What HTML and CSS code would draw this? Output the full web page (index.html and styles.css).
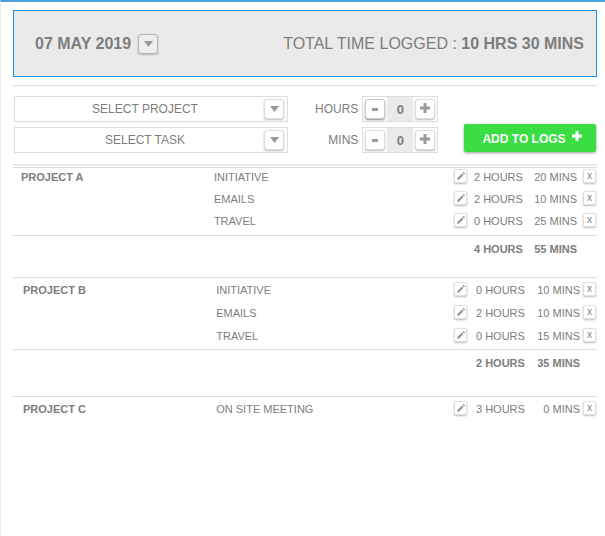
FILE: index.html
```html
<!DOCTYPE html>
<html lang="en">
<head>
<meta charset="utf-8">
<title>Time log</title>
<link rel="stylesheet" href="styles.css">
</head>
<body>
<svg class="sprites" aria-hidden="true">
  <symbol id="caret" viewBox="0 0 9 6"><path d="M0 0h9L4.500 6z"/></symbol>
  <symbol id="plus" viewBox="0 0 10 10"><path d="M3.500 0h3v3.500H10v3H6.500V10h-3V6.500H0v-3h3.500z"/></symbol>
  <symbol id="minus" viewBox="0 0 10 10"><path d="M2 5h6v3h-6z"/></symbol>
  <symbol id="pencil" viewBox="0 0 8 8"><path d="M0 8l.6-2.200L4.900 1.500l1.600 1.600L2.200 7.400zM5.400 1L6.200.2q.4-.3.800 0l.8.800q.3.400 0 .8l-.8.8z"/></symbol>
</svg>
<main class="page">
  <header class="summary">
    <div class="date">
      <strong>07 MAY 2019</strong>
      <button class="key key-date" type="button" aria-label="Choose date"><svg class="caret"><use href="#caret"/></svg></button>
    </div>
    <p class="total">TOTAL TIME LOGGED : <strong>10 HRS 30 MINS</strong></p>
  </header>

  <form class="entry">
    <div class="picks">
      <div class="pick">
        <select aria-label="Project"><option>SELECT PROJECT</option></select>
        <span class="key pick-key"><svg class="caret"><use href="#caret"/></svg></span>
      </div>
      <div class="pick">
        <select aria-label="Task"><option>SELECT TASK</option></select>
        <span class="key pick-key"><svg class="caret"><use href="#caret"/></svg></span>
      </div>
    </div>
    <div class="amounts">
      <label for="hours">HOURS</label>
      <div class="stepper">
        <button class="key key-strong" type="button" aria-label="Fewer hours"><svg class="sign"><use href="#minus"/></svg></button>
        <input id="hours" type="text" inputmode="numeric" value="0">
        <button class="key" type="button" aria-label="More hours"><svg class="sign"><use href="#plus"/></svg></button>
      </div>
      <label for="mins">MINS</label>
      <div class="stepper">
        <button class="key" type="button" aria-label="Fewer minutes"><svg class="sign"><use href="#minus"/></svg></button>
        <input id="mins" type="text" inputmode="numeric" value="0">
        <button class="key" type="button" aria-label="More minutes"><svg class="sign"><use href="#plus"/></svg></button>
      </div>
    </div>
    <button class="add" type="button">ADD TO LOGS <svg class="sign"><use href="#plus"/></svg></button>
  </form>

  <table class="log log-first">
    <tbody>
      <tr><th class="project" scope="row">PROJECT A</th><td class="task">INITIATIVE</td><td class="edit"><button class="key key-small" type="button" aria-label="Edit"><svg class="pencil"><use href="#pencil"/></svg></button></td><td class="hours">2 HOURS</td><td class="mins">20 MINS</td><td class="remove"><button class="key key-small" type="button" aria-label="Remove">x</button></td></tr>
      <tr><td></td><td>EMAILS</td><td><button class="key key-small" type="button" aria-label="Edit"><svg class="pencil"><use href="#pencil"/></svg></button></td><td>2 HOURS</td><td class="mins">10 MINS</td><td class="remove"><button class="key key-small" type="button" aria-label="Remove">x</button></td></tr>
      <tr><td></td><td>TRAVEL</td><td><button class="key key-small" type="button" aria-label="Edit"><svg class="pencil"><use href="#pencil"/></svg></button></td><td>0 HOURS</td><td class="mins">25 MINS</td><td class="remove"><button class="key key-small" type="button" aria-label="Remove">x</button></td></tr>
    </tbody>
    <tfoot>
      <tr><td colspan="3"></td><td>4 HOURS</td><td class="mins">55 MINS</td><td></td></tr>
    </tfoot>
  </table>

  <table class="log">
    <tbody>
      <tr><th class="project" scope="row">PROJECT B</th><td class="task">INITIATIVE</td><td class="edit"><button class="key key-small" type="button" aria-label="Edit"><svg class="pencil"><use href="#pencil"/></svg></button></td><td class="hours">0 HOURS</td><td class="mins">10 MINS</td><td class="remove"><button class="key key-small" type="button" aria-label="Remove">x</button></td></tr>
      <tr><td></td><td>EMAILS</td><td><button class="key key-small" type="button" aria-label="Edit"><svg class="pencil"><use href="#pencil"/></svg></button></td><td>2 HOURS</td><td class="mins">10 MINS</td><td class="remove"><button class="key key-small" type="button" aria-label="Remove">x</button></td></tr>
      <tr><td></td><td>TRAVEL</td><td><button class="key key-small" type="button" aria-label="Edit"><svg class="pencil"><use href="#pencil"/></svg></button></td><td>0 HOURS</td><td class="mins">15 MINS</td><td class="remove"><button class="key key-small" type="button" aria-label="Remove">x</button></td></tr>
    </tbody>
    <tfoot>
      <tr><td colspan="3"></td><td>2 HOURS</td><td class="mins">35 MINS</td><td></td></tr>
    </tfoot>
  </table>

  <table class="log">
    <tbody>
      <tr><th class="project" scope="row">PROJECT C</th><td class="task">ON SITE MEETING</td><td class="edit"><button class="key key-small" type="button" aria-label="Edit"><svg class="pencil"><use href="#pencil"/></svg></button></td><td class="hours">3 HOURS</td><td class="mins">0 MINS</td><td class="remove"><button class="key key-small" type="button" aria-label="Remove">x</button></td></tr>
    </tbody>
  </table>
</main>
</body>
</html>
```
FILE: styles.css
```css
* { box-sizing: border-box; }

body {
  margin: 0;
  background: #fff;
  color: #7d7d7d;
  font: 11px/16px "Liberation Sans", Arial, sans-serif;
}

button, input, select { font: inherit; color: inherit; margin: 0; padding: 0; }
svg { display: block; fill: #999; }
.sprites { display: none; }

.page {
  min-height: 100vh;
  padding: 8px 8px 16px 12px;
  border-top: 2px solid #4a9fe0;
  border-left: 1px solid #ebebeb;
}

.summary {
  display: flex;
  align-items: center;
  justify-content: space-between;
  height: 67px;
  padding: 0 12px 0 21px;
  border: 1px solid #1b91e6;
  background: #eaeaea;
  font-size: 16px;
}
.date { display: flex; align-items: center; gap: 7px; }
.total { margin: 0; }

/* Raised square key shared by carets, steppers and row actions */
.key {
  display: flex;
  align-items: center;
  justify-content: center;
  width: 20px;
  height: 20px;
  border: 1px solid #ddd;
  border-radius: 3px;
  background: #fff;
  box-shadow: 0 1px 2px #bbb;
}
.key-date { background: #eee; border-color: #b4b4b4; }
.key-strong { border-color: #ccc; box-shadow: 0 1px 2px #888; }
.key-small {
  width: 13px;
  height: 14px;
  border-color: #e0e0e0;
  border-radius: 2px;
  font-size: 10px;
  line-height: 10px;
}
.caret { width: 9px; height: 6px; }
.sign { width: 10px; height: 10px; }
.pencil { width: 8px; height: 8px; }

.entry {
  display: flex;
  align-items: flex-start;
  margin-top: 8px;
  padding: 10px 1px 11px 1px;
  border-top: 1px solid #ddd;
  border-bottom: 2px solid #ebebeb;
  font-size: 12px;
}
.picks { display: grid; gap: 5px; flex: 0 1 274px; }
.pick { position: relative; }
.pick select {
  display: block;
  width: 100%;
  height: 26px;
  padding-right: 12px;
  border: 1px solid #ddd;
  background: #fff;
  appearance: none;
  text-align-last: center;
}
.pick-key { position: absolute; right: 4px; top: 3px; pointer-events: none; }

.amounts {
  display: grid;
  grid-template-columns: auto auto;
  align-items: center;
  justify-items: end;
  gap: 5px 4px;
  margin-left: 27px;
}
.stepper { display: flex; align-items: center; height: 26px; padding: 0 2px; border: 1px solid #ddd; }
.stepper input {
  width: 26px;
  height: 24px;
  margin: 0 2px;
  border: 0;
  background: #eaeaea;
  font-size: 13px;
  font-weight: bold;
  text-align: center;
}
.stepper .sign { margin-bottom: 3px; }

.add {
  display: flex;
  align-items: center;
  justify-content: center;
  gap: 6px;
  width: 132px;
  height: 28px;
  margin: 28px 0 0 auto;
  padding: 2px 0 0 4px;
  border: 0;
  border-radius: 2px;
  background: #3ade43;
  box-shadow: 0 1px 3px #999;
  color: #fff;
  font-weight: bold;
}
.add svg { fill: #fff; margin-bottom: 6px; }

.log {
  width: 100%;
  margin-bottom: 20px;
  border-collapse: separate;
  border-spacing: 0;
  border-top: 1px solid #ddd;
  table-layout: fixed;
}
.log td, .log th {
  height: 23px;
  padding: 4px 0 0;
  text-align: left;
  vertical-align: top;
  white-space: nowrap;
}
.log tbody tr:nth-child(3) td { height: 25px; }
.log .project { width: 34.800%; padding-left: 10px; }
.edit { width: 22px; }
.hours { width: 56px; }
.log .mins { width: 48px; text-align: right; }
.log .remove { width: 17px; padding-right: 1px; }
.remove .key { margin-left: auto; }
.log tfoot td { height: 27px; padding-top: 5px; border-top: 1px solid #ddd; font-weight: bold; }

/* The first group sits tight under the entry form */
.log-first { margin-top: 1px; margin-bottom: 15px; }
.log-first tbody td, .log-first tbody th { height: 22px; padding-top: 1px; }
.log-first tbody tr:nth-child(3) td { height: 23px; }
.log-first .project { width: 34.400%; padding-left: 8px; }
.log-first .edit { width: 20px; }
.log-first .hours { width: 55px; }
.log-first .remove { width: 20px; }
```
